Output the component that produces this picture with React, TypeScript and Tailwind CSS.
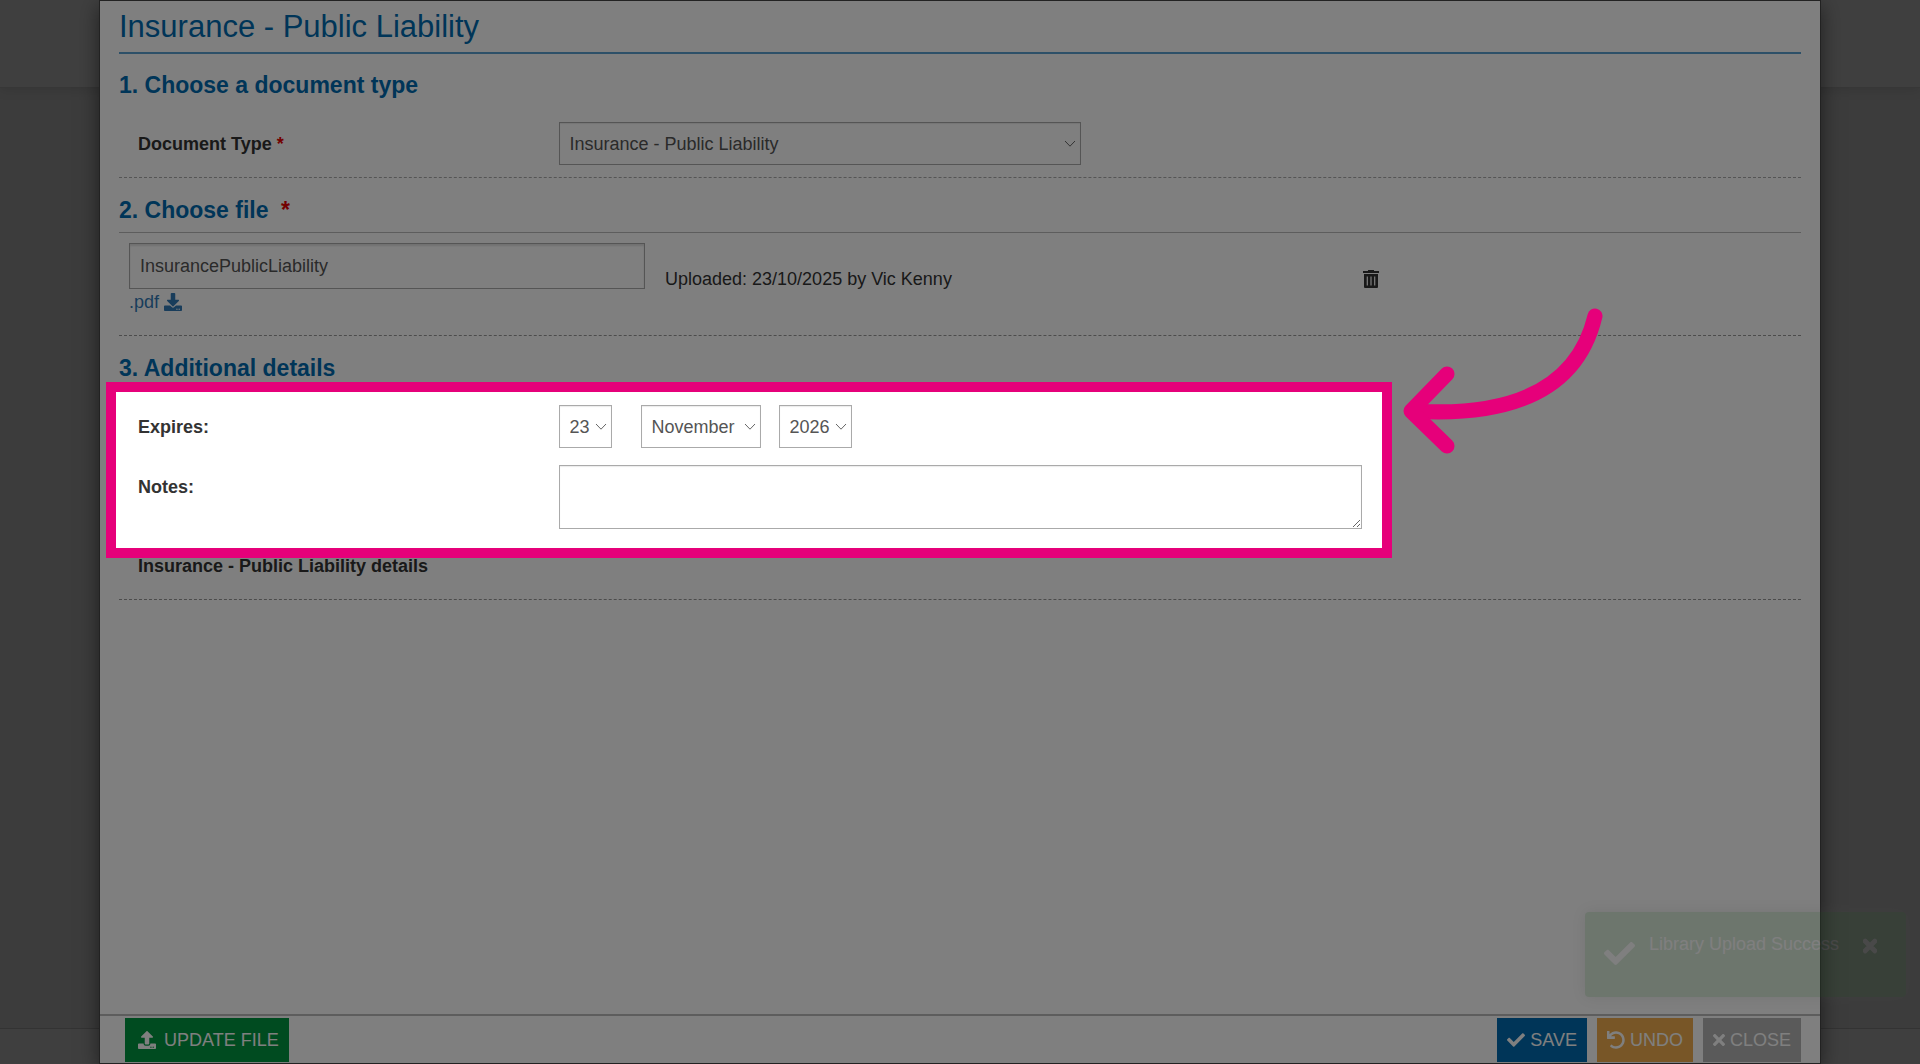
import type { ReactNode } from 'react'
import { FaCheck, FaDownload, FaTimes, FaUndo, FaUpload } from 'react-icons/fa'

interface SelectFieldProps {
  id: string
  label?: string
  value: string
  className: string
}

function SelectField({ id, label, value, className }: SelectFieldProps) {
  return (
    <div className={`relative ${className}`}>
      <select
        id={id}
        aria-label={label}
        defaultValue={value}
        className="block h-[43px] w-full appearance-none border border-[#aaa] bg-white pl-[10px] text-[18px] text-[#555] shadow-[inset_0_1px_1px_rgba(0,0,0,0.08)]"
      >
        <option>{value}</option>
      </select>
      <svg viewBox="0 0 12 8" className="pointer-events-none absolute top-[18px] right-[5px] h-2 w-3" fill="none" stroke="#666">
        <path d="M1 1l5 5.2L11 1" strokeWidth="1" />
      </svg>
    </div>
  )
}

interface FooterButtonProps {
  icon: ReactNode
  className: string
  children: ReactNode
}

function FooterButton({ icon, className, children }: FooterButtonProps) {
  return (
    <button type="button" className={`flex h-11 items-center text-[18px] text-white ${className}`}>
      {icon}
      {children}
    </button>
  )
}

function TrashIcon() {
  return (
    <svg viewBox="0 0 16 18" className="h-[18px] w-4" fill="currentColor">
      <path d="M5 0h6v1h5v2H0V1h5z" />
      <path fillRule="evenodd" d="M1 4h14v13a1 1 0 0 1-1 1H2a1 1 0 0 1-1-1zM3.7 6.5v9h1.2v-9zM7.4 6.5v9h1.2v-9zM11.1 6.5v9h1.2v-9z" />
    </svg>
  )
}

function PageBehind() {
  return (
    <div className="absolute inset-0 flex flex-col bg-[#f0f0f0]">
      <div className="h-[88px] border-b border-[#ddd] bg-white shadow-[0_1px_12px_rgba(0,0,0,0.12)]" />
      <div className="mt-auto h-9 border-t border-[#ccc] bg-[#fcfcfc]" />
      <div className="absolute inset-0 bg-black/50" />
    </div>
  )
}

function Toast() {
  return (
    <div className="absolute right-[14px] bottom-[67px] z-10 flex h-[85px] w-[321px] items-start rounded-[4px] bg-[#51a351] pl-[19px] text-white opacity-20 shadow-[0_0_15px_#999]">
      <FaCheck className="mt-[26px] size-[31px]" />
      <p className="mt-5 ml-[14px] text-[18px] leading-6">Library Upload Success</p>
      <button type="button" aria-label="Dismiss" className="mt-6 ml-6">
        <FaTimes className="h-5 w-[14px]" stroke="currentColor" strokeWidth="30" />
      </button>
    </div>
  )
}

// dims everything outside the highlighted fields
function Spotlight() {
  return (
    <>
      <div className="pointer-events-none absolute top-0 -right-[11px] -bottom-[5px] -left-[13px] z-20 border-[10px] border-[#e6007a] shadow-[0_0_0_9999px_rgba(0,0,0,0.5)]" />
      <svg
        viewBox="0 0 210 150"
        className="pointer-events-none absolute -top-[77px] left-full z-30 ml-5 h-[150px] w-[210px]"
        fill="none"
        stroke="#e6007a"
        strokeWidth="15"
        strokeLinecap="round"
        strokeLinejoin="round"
      >
        <path d="M194 11C181 66 137 114 11 106" />
        <path d="M46 69L10 106L46 141" />
      </svg>
    </>
  )
}

export default function App() {
  return (
    <div className="relative flex min-h-screen overflow-hidden font-['Liberation_Sans',Arial,sans-serif] text-[18px] leading-[26px] text-[#333]">
      <PageBehind />
      <Toast />

      <main className="relative mx-[99px] flex flex-1 flex-col border border-[#444] bg-white shadow-[0_6px_19px_rgba(0,0,0,0.5)]">
        <form className="flex-1 px-[19px]">
          <h1 className="border-b-2 border-[#5aa0d0] pt-[9px] pb-2 text-[31px] leading-[34px] text-[#006bb0]">
            Insurance - Public Liability
          </h1>

          <section className="border-b border-dashed border-[#aaa] pt-[17px] pb-3">
            <h2 className="text-[23px] leading-7 font-bold text-[#006bb0]">1. Choose a document type</h2>
            <div className="flex pt-[23px]">
              <label htmlFor="document-type" className="w-1/4 pt-[9px] pl-[19px] font-bold">
                Document Type <span className="text-[#e60000]">*</span>
              </label>
              <div className="w-1/3 px-[19px]">
                <SelectField id="document-type" value="Insurance - Public Liability" className="w-full" />
              </div>
            </div>
          </section>

          <section className="border-b border-dashed border-[#999] pt-[18px] pb-5">
            <h2 className="border-b border-[#bbb] pb-2 text-[23px] leading-7 font-bold text-[#006bb0]">
              2. Choose file <span className="ml-[6px] text-[#e60000]">*</span>
            </h2>
            <div className="flex items-center pt-[10px]">
              <div className="w-[536px] px-[10px]">
                <input
                  type="text"
                  aria-label="File name"
                  defaultValue="InsurancePublicLiability"
                  className="block h-[46px] w-full border border-[#aaa] bg-white px-[10px] text-[18px] text-[#555] shadow-[inset_0_2px_2px_rgba(0,0,0,0.12)]"
                />
                <a href="#download" className="inline-flex items-center gap-[5px] text-[#337ab7]">
                  .pdf <FaDownload className="size-[18px]" />
                </a>
              </div>
              <p className="w-[42%] px-[10px]">Uploaded: 23/10/2025 by Vic Kenny</p>
              <button type="button" aria-label="Delete file" className="px-[2px]">
                <TrashIcon />
              </button>
            </div>
          </section>

          <section className="border-b border-dashed border-[#999] pt-[18px] pb-5">
            <h2 className="text-[23px] leading-7 font-bold text-[#006bb0]">3. Additional details</h2>
            <div className="relative w-3/4 pt-[23px] pb-6">
              <div className="flex">
                <label htmlFor="expires-day" className="w-1/3 pt-[9px] pl-[19px] font-bold">
                  Expires:
                </label>
                <div className="flex w-2/3 px-[19px]">
                  <SelectField id="expires-day" value="23" className="w-[53px]" />
                  <SelectField id="expires-month" label="Expires month" value="November" className="ml-[29px] w-[120px]" />
                  <SelectField id="expires-year" label="Expires year" value="2026" className="ml-[18px] w-[73px]" />
                </div>
              </div>
              <div className="flex pt-[17px]">
                <label htmlFor="notes" className="w-1/3 pt-[9px] pl-[19px] font-bold">
                  Notes:
                </label>
                <div className="w-2/3 px-[19px]">
                  <textarea
                    id="notes"
                    className="block h-16 w-full resize border border-[#aaa] bg-white p-2 text-[#555] shadow-[inset_0_1px_1px_rgba(0,0,0,0.08)]"
                  />
                </div>
              </div>
              <Spotlight />
            </div>
            <h3 className="pl-[19px] font-bold">Insurance - Public Liability details</h3>
          </section>
        </form>

        <footer className="flex border-t-2 border-[#bbb] pt-[2px] pr-[19px] pb-px pl-[25px]">
          <FooterButton icon={<FaUpload className="size-[18px]" />} className="gap-2 bg-[#009640] pr-[10px] pl-[13px]">
            UPDATE FILE
          </FooterButton>
          <div className="ml-auto flex gap-[10px]">
            <FooterButton icon={<FaCheck className="size-[18px]" />} className="gap-[5px] bg-[#006bb0] px-[10px]">
              SAVE
            </FooterButton>
            <FooterButton icon={<FaUndo className="size-[18px]" />} className="gap-[5px] bg-[#f0ad4e] px-[10px]">
              UNDO
            </FooterButton>
            <FooterButton icon={<FaTimes className="h-[18px] w-3" />} className="gap-[5px] bg-[#b4b4b4] px-[10px]">
              CLOSE
            </FooterButton>
          </div>
        </footer>
      </main>
    </div>
  )
}
